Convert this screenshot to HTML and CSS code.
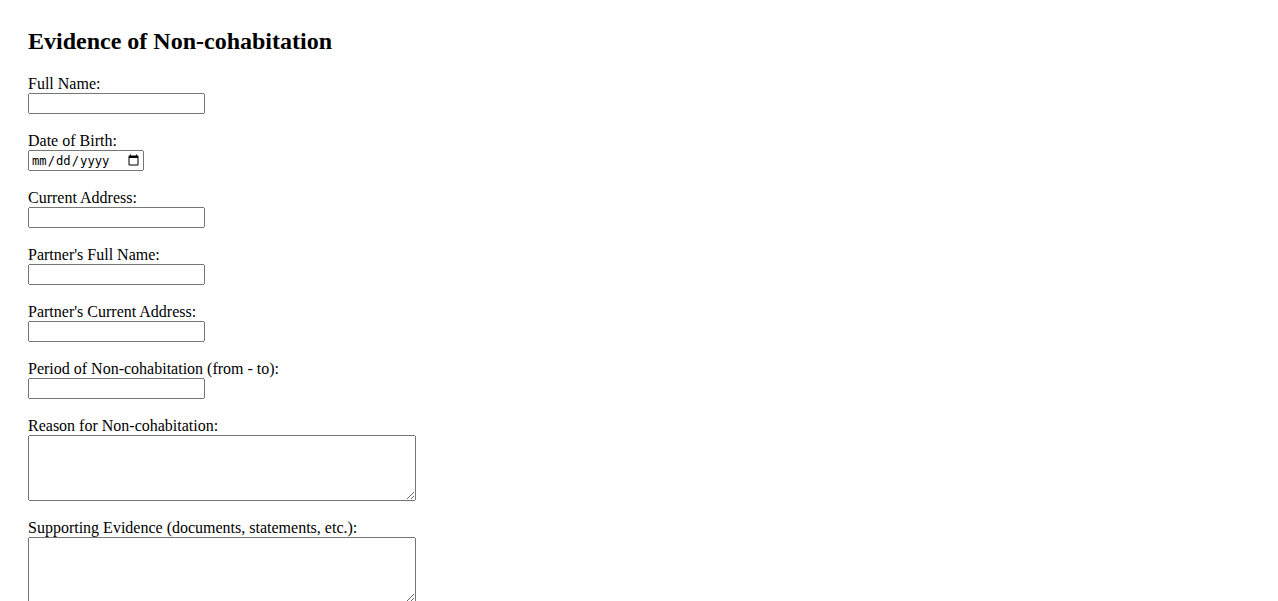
FILE: index.html
```
<!DOCTYPE html>
<html lang="en">
<head>
    <meta charset="utf-8">
    <title>Evidence of Non-cohabitation</title>
    <link rel="stylesheet" href="styles.css">
</head>
<body>
    <h2>Evidence of Non-cohabitation</h2>
    <form>
        <label for="full-name">Full Name:</label><br>
        <input class="field" type="text" id="full-name" name="full-name"><br><br>

        <label for="dob">Date of Birth:</label><br>
        <input class="date" type="date" id="dob" name="dob"><br><br>

        <label for="address">Current Address:</label><br>
        <input class="field" type="text" id="address" name="address"><br><br>

        <label for="partner-name">Partner's Full Name:</label><br>
        <input class="field" type="text" id="partner-name" name="partner-name"><br><br>

        <label for="partner-address">Partner's Current Address:</label><br>
        <input class="field" type="text" id="partner-address" name="partner-address"><br><br>

        <label for="period">Period of Non-cohabitation (from - to):</label><br>
        <input class="field" type="text" id="period" name="period"><br><br>

        <label for="reason">Reason for Non-cohabitation:</label><br>
        <textarea class="long-text" id="reason" name="reason" rows="4" cols="50"></textarea><br><br>

        <label for="evidence">Supporting Evidence (documents, statements, etc.):</label><br>
        <textarea class="long-text" id="evidence" name="evidence" rows="4" cols="50"></textarea>
    </form>
</body>
</html>
```
FILE: styles.css
```
html {
    overflow: hidden;
}

body {
    font-family: "Liberation Serif", "Times New Roman", serif;
    font-size: 16px;
    margin: 28px;
}

h2 {
    margin: 0 0 20px;
}

.field {
    box-sizing: border-box;
    width: 177px;
    height: 21px;
}

.date {
    box-sizing: border-box;
    width: 116px;
    height: 21px;
    font-family: "DejaVu Sans Mono", monospace;
    font-size: 12.2px;
    vertical-align: top;
}

.date::-webkit-calendar-picker-indicator {
    width: 13px;
    height: 13px;
}

.long-text {
    box-sizing: border-box;
    width: 388px;
    height: 66px;
    vertical-align: top;
}
```
